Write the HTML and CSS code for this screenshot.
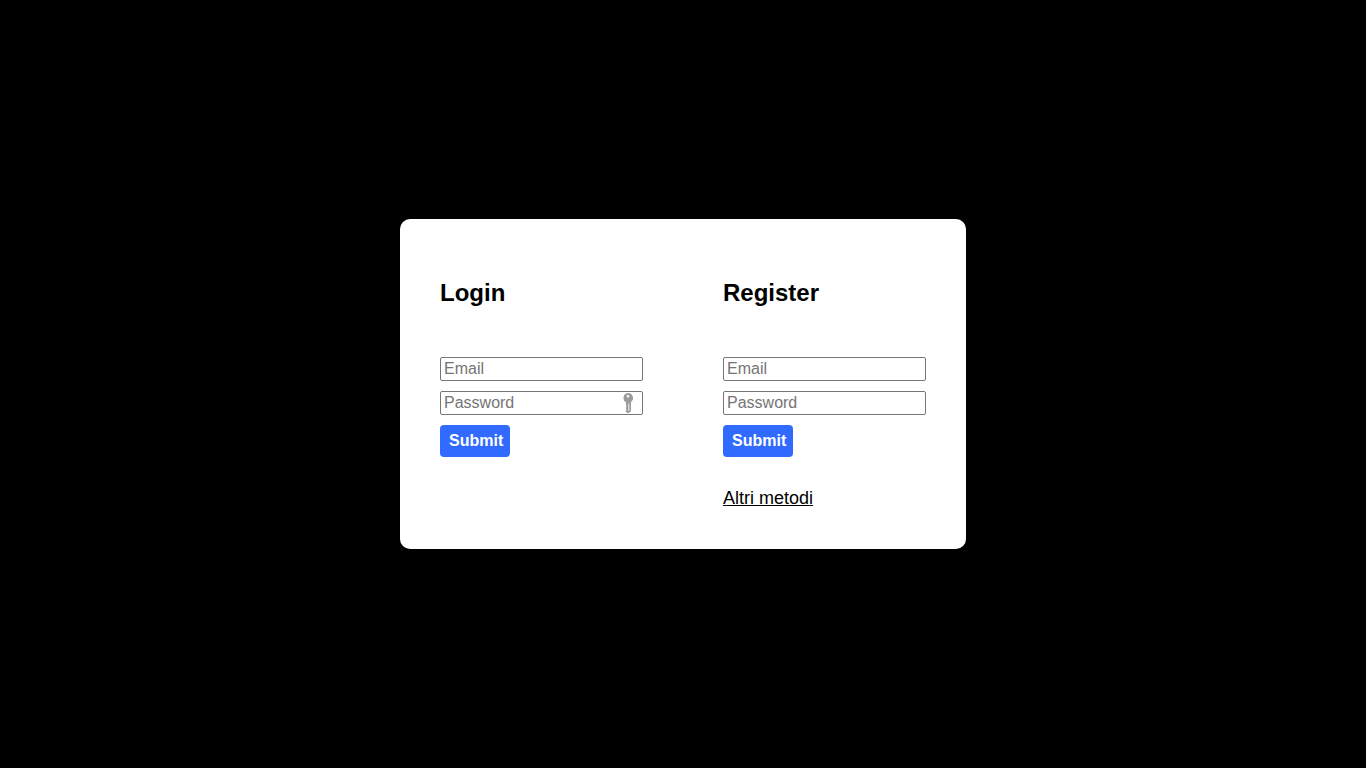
FILE: index.html
```html
<!DOCTYPE html>
<html lang="it">
<head>
<meta charset="utf-8">
<meta name="viewport" content="width=device-width, initial-scale=1">
<title>Login</title>
<link rel="stylesheet" href="styles.css">
</head>
<body>
<main class="card">
  <form class="panel">
    <h2 class="title">Login</h2>
    <input class="field" type="email" placeholder="Email" aria-label="Email">
    <div class="password">
      <input class="field" type="password" placeholder="Password" aria-label="Password">
      <svg class="key" viewBox="0 0 10 20" aria-hidden="true">
        <path fill="#9b9b9b" fill-rule="evenodd" d="M5 0a5 5 0 0 1 3 9V18L6 20H4.5L2.7 18.6V17.4L3.8 16.4L2.7 15.4V14.4L3.8 13.4L3 12.5V9.3A5 5 0 0 1 5 0ZM5 2a1.3 1.3 0 1 0 0 2.6a1.3 1.3 0 0 0 0-2.6ZM5.4 10.5V18H6.3V10.5Z"/>
      </svg>
    </div>
    <button class="submit" type="button">Submit</button>
  </form>
  <form class="panel">
    <h2 class="title">Register</h2>
    <input class="field" type="email" placeholder="Email" aria-label="Email">
    <input class="field" type="password" placeholder="Password" aria-label="Password">
    <button class="submit" type="button">Submit</button>
    <a class="link" href="#">Altri metodi</a>
  </form>
</main>
</body>
</html>
```
FILE: styles.css
```css
* {
  box-sizing: border-box;
}

body {
  margin: 0;
  min-height: 100vh;
  display: flex;
  align-items: center;
  justify-content: center;
  background: #000;
  color: #000;
  font-family: Arial, "Liberation Sans", sans-serif;
}

.card {
  display: flex;
  flex-wrap: wrap;
  gap: 80px;
  padding: 40px;
  background: #fff;
  border-radius: 10px;
}

.panel {
  display: flex;
  flex-direction: column;
  align-items: flex-start;
  gap: 10px;
  width: 203px;
}

.title {
  margin: 20px 0 40px;
  font-size: 24px;
  line-height: 28px;
}

.field {
  display: block;
  width: 100%;
  height: 24px;
  padding: 1px 3px;
  border: 1px solid #767676;
  border-radius: 2px;
  background: #fff;
  font-family: inherit;
  font-size: 16px;
}

.field::placeholder {
  color: #757575;
}

.password {
  position: relative;
  width: 100%;
}

.key {
  position: absolute;
  top: 2px;
  right: 10px;
  width: 10px;
  height: 20px;
}

.submit {
  height: 32px;
  padding: 0 7px 0 9px;
  border: 0;
  border-radius: 4px;
  background: #306aff;
  color: #fff;
  font-family: inherit;
  font-size: 16px;
  font-weight: 700;
}

.link {
  margin-top: 20px;
  color: #000;
  font-size: 18px;
  line-height: 22px;
}
```
